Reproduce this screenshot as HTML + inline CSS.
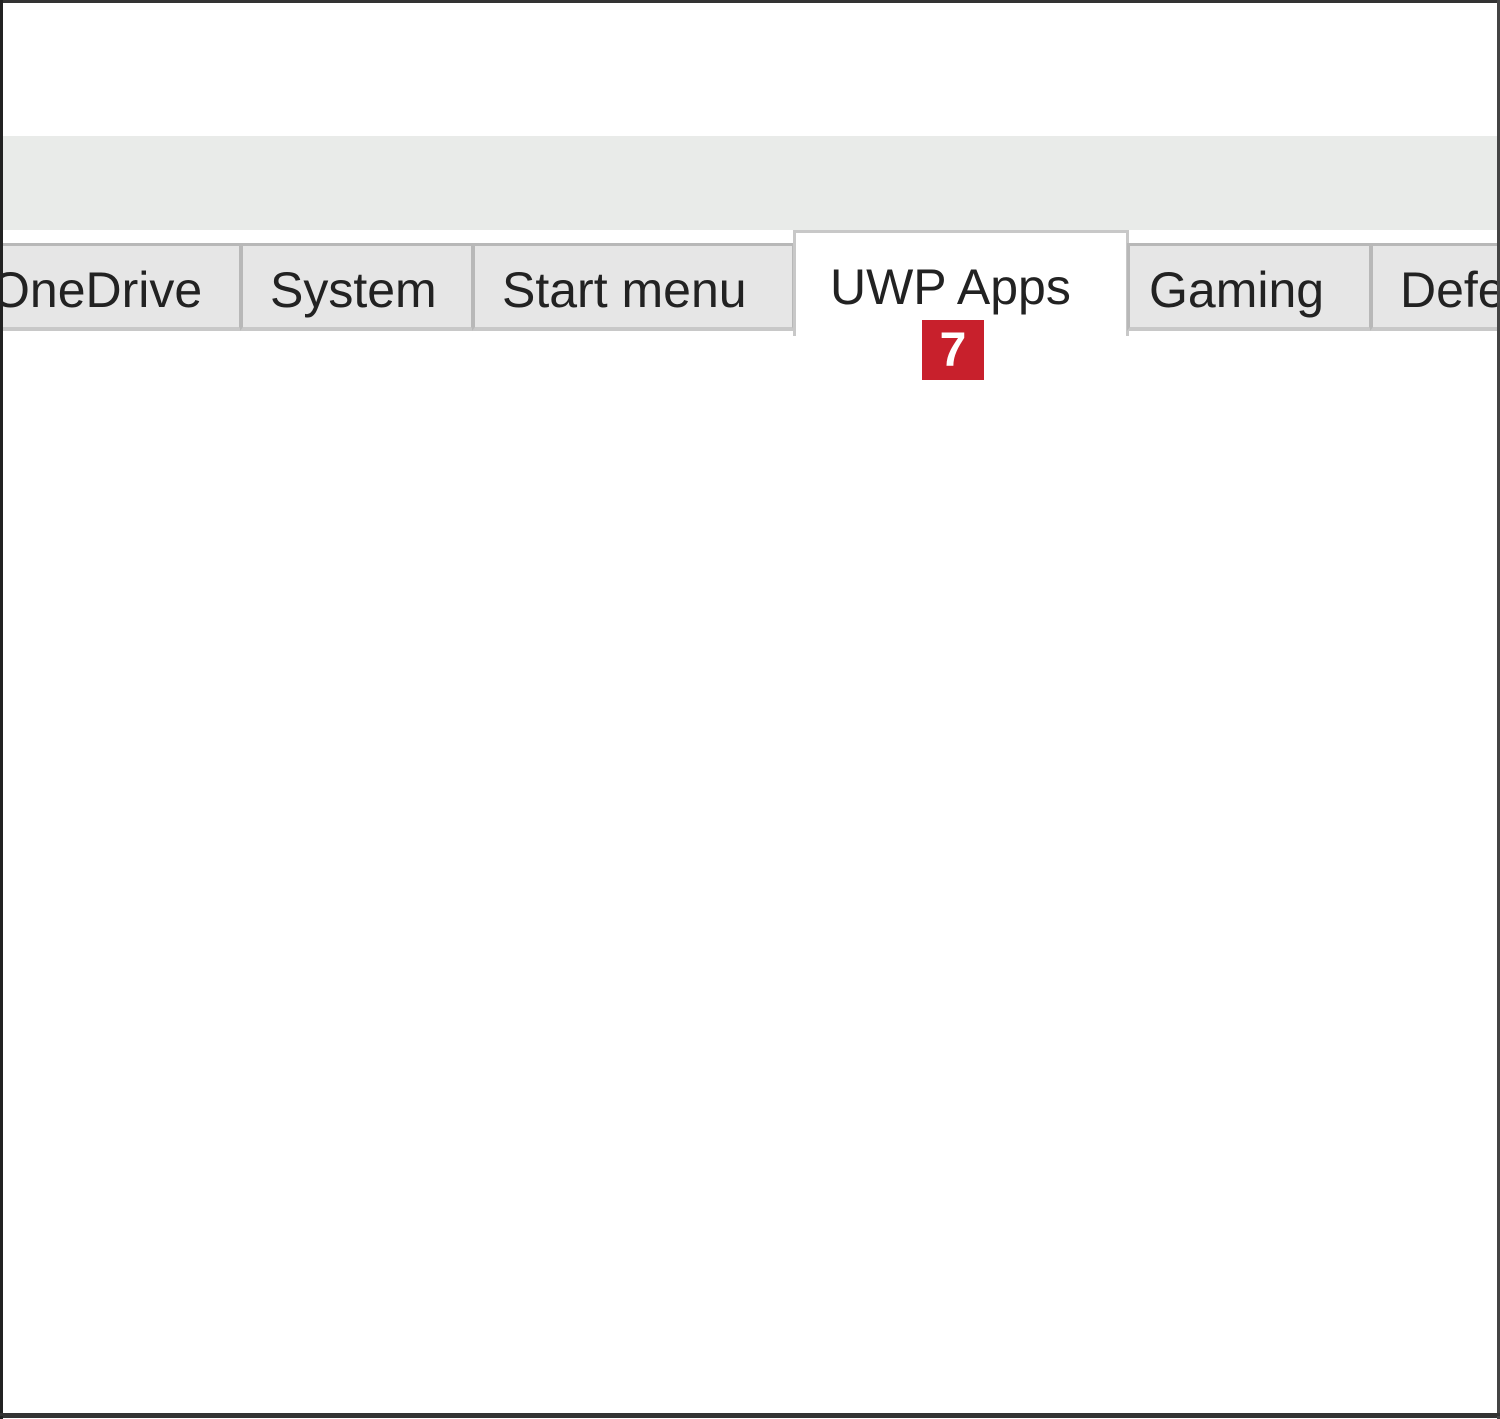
<!DOCTYPE html><html><head><style>
body{margin:0;width:1500px;height:1419px;background:#fff;position:relative;overflow:hidden;font-family:"Liberation Sans",sans-serif}
.frame{position:absolute;left:0;top:0;width:1494px;height:1412px;border:3px solid #333;border-right-width:3px;box-sizing:content-box}
.band{position:absolute;left:3px;top:136px;width:1494px;height:94px;background:#e9ebe9}
.tab{position:absolute;top:243px;height:88px;background:#e6e6e6;border:3px solid #b8b8b8;border-bottom:4px solid #c8c8c8;box-sizing:border-box;font-size:50px;color:#222;line-height:88px;white-space:nowrap;overflow:hidden}
.act{top:230px;height:106px;background:#fff;border-bottom:none;line-height:108px}
.badge{position:absolute;left:922px;top:320px;width:62px;height:60px;background:#c8202c;color:#fff;font-weight:bold;font-size:48px;text-align:center;line-height:62px}
</style></head><body>
<div class="frame"></div>
<div class="band"></div>
<div class="tab" style="left:-10px;width:252px;padding-left:0"><span style="margin-left:-2px">OneDrive</span></div>
<div class="tab" style="left:240px;width:234px;padding-left:27px">System</div>
<div class="tab" style="left:472px;width:323px;padding-left:27px">Start menu</div>
<div class="tab act" style="left:793px;width:336px;padding-left:34px;border-color:#c8c8c8">UWP Apps</div>
<div class="tab" style="left:1127px;width:245px;padding-left:19px">Gaming</div>
<div class="tab" style="left:1370px;width:140px;padding-left:27px">Defender</div>
<div class="badge">7</div>
<div style="position:absolute;left:0;top:0;width:3px;height:1419px;background:#222"></div>
<div style="position:absolute;left:1497px;top:0;width:3px;height:1419px;background:#444"></div>
<div style="position:absolute;left:0;top:1413px;width:1500px;height:3px;background:#333"></div>
</body></html>
